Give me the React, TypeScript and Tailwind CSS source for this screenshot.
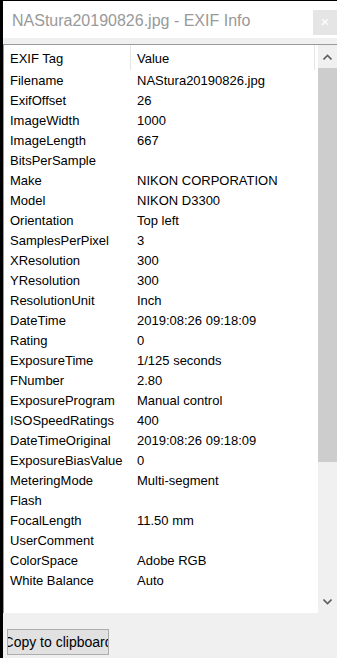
import React from "react";

const rows: [string, string][] = [
  ["Filename", "NAStura20190826.jpg"],
  ["ExifOffset", "26"],
  ["ImageWidth", "1000"],
  ["ImageLength", "667"],
  ["BitsPerSample", ""],
  ["Make", "NIKON CORPORATION"],
  ["Model", "NIKON D3300"],
  ["Orientation", "Top left"],
  ["SamplesPerPixel", "3"],
  ["XResolution", "300"],
  ["YResolution", "300"],
  ["ResolutionUnit", "Inch"],
  ["DateTime", "2019:08:26 09:18:09"],
  ["Rating", "0"],
  ["ExposureTime", "1/125 seconds"],
  ["FNumber", "2.80"],
  ["ExposureProgram", "Manual control"],
  ["ISOSpeedRatings", "400"],
  ["DateTimeOriginal", "2019:08:26 09:18:09"],
  ["ExposureBiasValue", "0"],
  ["MeteringMode", "Multi-segment"],
  ["Flash", ""],
  ["FocalLength", "11.50 mm"],
  ["UserComment", ""],
  ["ColorSpace", "Adobe RGB"],
  ["White Balance", "Auto"],
];

const Chevron = ({ up }: { up?: boolean }) => (
  <svg width="9" height="6" viewBox="0 0 9 6" className={up ? "" : "rotate-180"}>
    <path d="M0.5 5.5 L4.5 1.5 L8.5 5.5" fill="none" stroke="#606060" strokeWidth="1.6" />
  </svg>
);

export default function App() {
  return (
    <div
      className="w-[337px] h-[658px] bg-black pl-[3px] pt-px flex flex-col overflow-hidden text-black"
      style={{ fontFamily: '"Liberation Sans", Arial, sans-serif' }}
    >
      {/* title bar */}
      <div className="h-[37px] bg-white flex items-start justify-between shrink-0">
        <div className="pl-[9px] pt-[10px] text-[16px] leading-[20px] text-[#999999] whitespace-nowrap">
          NAStura20190826.jpg - EXIF Info
        </div>
        <div className="mt-[9px] w-[24px] h-[25px] bg-[#e5e5e5] flex items-center justify-center text-white text-[15px]">
          ×
        </div>
      </div>

      <div className="flex-1 bg-[#f0f0f0] flex flex-col">
        <div className="h-[6px]" />
        {/* list box */}
        <div className="h-[569px] bg-white border-t border-l border-[#9a9a9a] flex">
          <div className="flex-1 flex flex-col text-[13px]">
            <div className="h-[25px] flex">
              <div className="w-[127px] pl-[6px] pt-[2px] flex items-center border-r border-[#e5e5e5]">EXIF Tag</div>
              <div className="flex-1 pl-[6px] pt-[2px] flex items-center border-r border-[#e5e5e5] mr-[3px]">Value</div>
            </div>
            {rows.map(([k, v]) => (
              <div key={k} className="h-[20px] pt-px flex items-center whitespace-nowrap">
                <div className="w-[127px] pl-[6px]">{k}</div>
                <div className="flex-1 pl-[6px]">{v}</div>
              </div>
            ))}
          </div>
          {/* scrollbar */}
          <div className="w-[19px] flex flex-col bg-[#f0f0f0]">
            <div className="h-[23px] flex items-center justify-center">
              <Chevron up />
            </div>
            <div className="h-[394px] bg-[#cdcdcd]" />
            <div className="flex-1" />
            <div className="h-[23px] flex items-center justify-center">
              <Chevron />
            </div>
          </div>
        </div>
        {/* button */}
        <div className="pt-[16px] pl-[4px]">
          <div className="w-[102px] h-[26px] bg-[#e1e1e1] border border-[#adadad] overflow-hidden flex items-center justify-center">
            <span className="whitespace-nowrap text-[14px]">Copy to clipboard</span>
          </div>
        </div>
      </div>
    </div>
  );
}
